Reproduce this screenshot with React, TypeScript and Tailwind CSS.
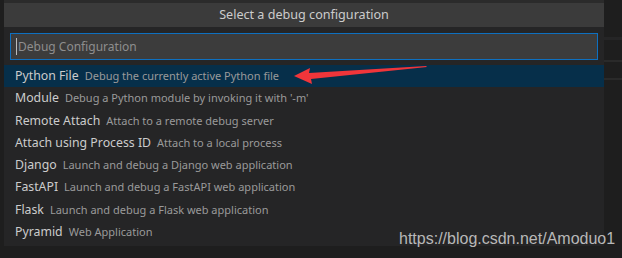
const items = [
  { label: 'Python File', detail: 'Debug the currently active Python file' },
  { label: 'Module', detail: "Debug a Python module by invoking it with '-m'" },
  { label: 'Remote Attach', detail: 'Attach to a remote debug server' },
  { label: 'Attach using Process ID', detail: 'Attach to a local process' },
  { label: 'Django', detail: 'Launch and debug a Django web application' },
  { label: 'FastAPI', detail: 'Launch and debug a FastAPI web application' },
  { label: 'Flask', detail: 'Launch and debug a Flask web application' },
  { label: 'Pyramid', detail: 'Web Application' },
]

function Arrow() {
  return (
    <svg className="absolute left-[294px] top-[65px]" width="134" height="20" viewBox="0 0 134 20">
      <polygon points="0,11 16,3 15,8 132,1 133,2 17,14 18,19" fill="#f0353a" />
    </svg>
  )
}

export default function App() {
  return (
    <div
      className="relative w-[622px] h-[258px] bg-[#1e1e1e] overflow-hidden flex"
      style={{ fontFamily: '"Noto Sans", "Open Sans", sans-serif' }}
    >
      <div className="w-[4px] shrink-0 bg-[#1e1e1e]" />

      <div className="w-[600px] shrink-0 flex flex-col">
        <div className="h-[3px] bg-[#2b2b2b]" />
        <div className="h-[24px] bg-[#3b3b3b] flex items-center justify-center text-[12.6px] text-[#cccccc]">
          Select a debug configuration
        </div>
        <div className="bg-[#252526] pb-[3px] pt-[6px]">
          <div className="mx-[6px] w-[588px] h-[27px] border border-[#0e70c0] bg-[#3c3c3c] flex items-center px-[5px]">
            <span className="w-px h-[17px] bg-[#bbbbbb]" />
            <span className="text-[12px] text-[#8e8e8e] ml-px">Debug Configuration</span>
          </div>
          <div className="mt-[5px] flex flex-col">
            {items.map((it, i) => (
              <div
                key={it.label}
                className={`h-[22.3px] flex items-center pl-[11px] ${i === 0 ? 'bg-[#062f4a]' : ''}`}
              >
                <div className="flex items-baseline gap-[6px]">
                  <span className="text-[12.3px] text-[#cccccc]">{it.label}</span>
                  <span className="text-[11px] text-[#9a9a9a]">{it.detail}</span>
                </div>
              </div>
            ))}
          </div>
        </div>
      </div>

      <div className="flex-1 flex flex-col">
        <div className="h-[37px] bg-[#1e1e1e]" />
        <div className="h-[3px] bg-[#252526]" />
        <div className="h-[20px] bg-[#1e1e1e]" />
        <div className="h-[2px] bg-[#2a2a2a]" />
        <div className="h-[16px] bg-[#1e1e1e]" />
        <div className="h-[2px] bg-[#2a2a2a]" />
        <div className="flex-1 bg-[#1e1e1e]" />
      </div>

      <Arrow />

      <div
        className="absolute left-[399px] top-[227px] text-[16px] text-[#b8b8b8]"
        style={{ fontFamily: '"Liberation Sans", Arial, sans-serif' }}
      >
        https://blog.csdn.net/Amoduo1
      </div>
    </div>
  )
}
